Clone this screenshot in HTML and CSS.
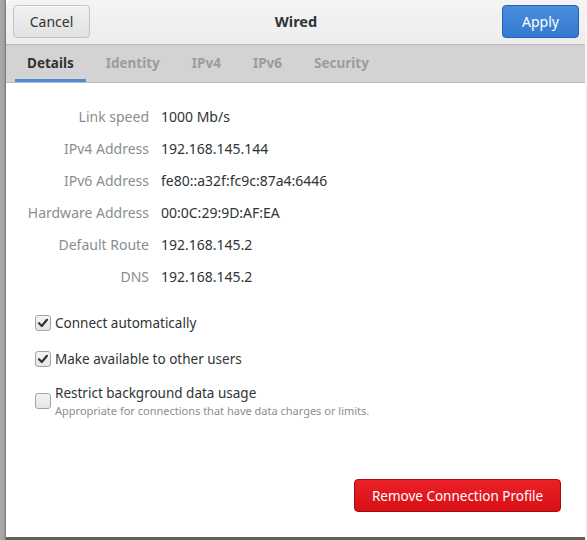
FILE: index.html
```html
<!DOCTYPE html>
<html>
<head>
<meta charset="utf-8">
<link rel="stylesheet" href="styles.css">
</head>
<body>
<div class="dialog">
  <header class="headerbar">
    <button class="btn btn-cancel">Cancel</button>
    <div class="title">Wired</div>
    <button class="btn btn-apply">Apply</button>
  </header>
  <nav class="tabs">
    <div class="tab active">Details</div>
    <div class="tab">Identity</div>
    <div class="tab">IPv4</div>
    <div class="tab">IPv6</div>
    <div class="tab">Security</div>
  </nav>
  <main class="content">
    <div class="info">
      <div class="label">Link speed</div><div class="value">1000 Mb/s</div>
      <div class="label">IPv4 Address</div><div class="value">192.168.145.144</div>
      <div class="label">IPv6 Address</div><div class="value">fe80::a32f:fc9c:87a4:6446</div>
      <div class="label">Hardware Address</div><div class="value">00:0C:29:9D:AF:EA</div>
      <div class="label">Default Route</div><div class="value">192.168.145.2</div>
      <div class="label">DNS</div><div class="value">192.168.145.2</div>
    </div>
    <div class="checks">
      <label class="check">
        <span class="box checked"><svg viewBox="0 0 14 14" width="14" height="14"><path d="M3 7.2 L5.8 10 L11 3.8" fill="none" stroke="#2e3436" stroke-width="2.2" stroke-linecap="round" stroke-linejoin="round"/></svg></span>
        <span class="check-text">Connect automatically</span>
      </label>
      <label class="check">
        <span class="box checked"><svg viewBox="0 0 14 14" width="14" height="14"><path d="M3 7.2 L5.8 10 L11 3.8" fill="none" stroke="#2e3436" stroke-width="2.2" stroke-linecap="round" stroke-linejoin="round"/></svg></span>
        <span class="check-text">Make available to other users</span>
      </label>
      <label class="check check-multi">
        <span class="box"></span>
        <span class="check-lines">
          <span class="check-text">Restrict background data usage</span>
          <span class="check-sub">Appropriate for connections that have data charges or limits.</span>
        </span>
      </label>
    </div>
    <div class="footer">
      <button class="btn btn-remove">Remove Connection Profile</button>
    </div>
  </main>
</div>
</body>
</html>
```
FILE: styles.css
```css
html, body {
  margin: 0;
  padding: 0;
}
body {
  width: 587px;
  height: 540px;
  background: #f6f6f6;
  font-family: "Noto Sans", "DejaVu Sans", sans-serif;
  font-size: 14px;
  color: #2e3436;
  overflow: hidden;
  position: relative;
}
body::before {
  content: "";
  position: absolute;
  left: 0;
  top: 0;
  width: 6px;
  height: 540px;
  background: linear-gradient(to right, #a9a9a9 0, #a2a2a2 4px, #727272 6px);
}
.dialog {
  margin-left: 6px;
  width: 579px;
  height: 537px;
  border-bottom: 3px solid #5e5e5e;
  border-top-right-radius: 7px;
  background: #ffffff;
  display: flex;
  flex-direction: column;
  overflow: hidden;
}
.headerbar {
  height: 45px;
  flex: none;
  box-sizing: border-box;
  background: linear-gradient(#f4f4f4, #ededed);
  border-bottom: 1px solid #bdb8b3;
  display: flex;
  align-items: center;
  justify-content: space-between;
  padding: 0 6px 2px 7px;
  border-top-left-radius: 6px;
  border-top-right-radius: 7px;
}
.title {
  font-weight: bold;
  font-size: 14.5px;
  color: #2e3436;
}
.btn {
  font-family: inherit;
  font-size: 14px;
  border-radius: 4px;
  box-sizing: border-box;
  cursor: default;
}
.btn-cancel {
  width: 77px;
  height: 33px;
  background: linear-gradient(#f0f0f0, #e2e2e2);
  border: 1px solid #c6c1bc;
  color: #2e3436;
  box-shadow: inset 0 1px #fafafa;
}
.btn-apply {
  width: 77px;
  height: 33px;
  background: linear-gradient(#4a8fdc, #3479d0);
  border: 1px solid #1d61b8;
  color: #ffffff;
}
.tabs {
  height: 38px;
  flex: none;
  box-sizing: border-box;
  background: #d3d3d3;
  border-bottom: 1px solid #bcbcbc;
  display: flex;
  padding-left: 9px;
}
.tab {
  padding: 1px 12px 0 12px;
  margin-right: 8px;
  font-weight: bold;
  font-size: 13.5px;
  color: #9c9c9c;
  display: flex;
  align-items: center;
  border-bottom: 3px solid transparent;
}
.tab.active {
  color: #2e3436;
  border-bottom-color: #4a8fd6;
}
.content {
  flex: 1;
  display: flex;
  flex-direction: column;
  padding: 23px 0 25px 24px;
}
.info {
  display: grid;
  grid-template-columns: 125px auto;
  margin-left: -6px;
  column-gap: 12px;
  row-gap: 12px;
  grid-auto-rows: 20px;
  align-items: center;
}
.label {
  text-align: right;
  white-space: nowrap;
  color: #8b8e8f;
}
.value {
  color: #2e3436;
  white-space: nowrap;
}
.checks {
  margin-top: 27px;
  display: flex;
  flex-direction: column;
  gap: 16px;
  padding-left: 5px;
}
.check {
  display: flex;
  align-items: center;
  gap: 4px;
}
.check-multi {
  margin-top: -2px;
}
.box {
  width: 14px;
  height: 14px;
  border: 1px solid #a7a39f;
  border-radius: 3px;
  background: linear-gradient(#f4f4f4, #e5e5e5);
  display: flex;
  align-items: center;
  justify-content: center;
  flex: none;
}
.box svg {
  display: block;
}
.check-lines {
  display: flex;
  flex-direction: column;
}
.check-text {
  font-size: 13.5px;
  line-height: 20px;
}
.check-sub {
  font-size: 11px;
  color: #8b8e8f;
  line-height: 15px;
}
.footer {
  margin-top: auto;
  display: flex;
  justify-content: flex-end;
  padding-right: 24px;
}
.btn-remove {
  width: 207px;
  height: 33px;
  background: linear-gradient(#ec2128, #d90f16);
  border: 1px solid #a50d12;
  color: #ffffff;
  font-size: 13.5px;
}
```
